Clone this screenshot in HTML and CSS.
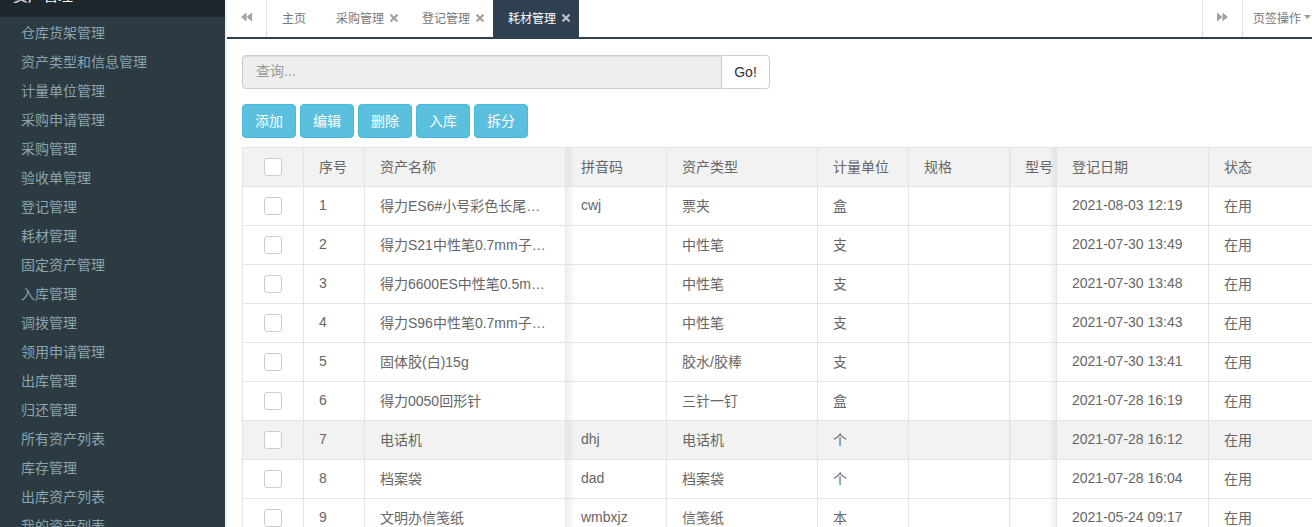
FILE: index.html
```html
<!DOCTYPE html>
<html lang="zh-CN">
<head>
<meta charset="utf-8">
<title>耗材管理</title>
<link rel="stylesheet" href="styles.css">
</head>
<body>
<div class="app">
  <aside class="sidebar">
    <div class="side-head"><span>资产管理</span></div>
    <ul class="side-menu">
      <li>仓库货架管理</li>
      <li>资产类型和信息管理</li>
      <li>计量单位管理</li>
      <li>采购申请管理</li>
      <li>采购管理</li>
      <li>验收单管理</li>
      <li>登记管理</li>
      <li>耗材管理</li>
      <li>固定资产管理</li>
      <li>入库管理</li>
      <li>调拨管理</li>
      <li>领用申请管理</li>
      <li>出库管理</li>
      <li>归还管理</li>
      <li>所有资产列表</li>
      <li>库存管理</li>
      <li>出库资产列表</li>
      <li>我的资产列表</li>
    </ul>
  </aside>
  <main class="main">
    <nav class="tabbar">
      <button class="tab-nav tab-nav-left" type="button">
        <svg class="nav-icon" width="11" height="10" viewBox="0 0 11 10"><polygon points="0,5 5.5,0.5 5.5,9.5"/><polygon points="5.5,5 11,0.5 11,9.5"/></svg>
      </button>
      <div class="tabs">
        <a class="tab tab-home">主页</a>
        <a class="tab">采购管理<svg class="tab-close" width="8" height="8" viewBox="0 0 8 8"><path d="M1.2 1.2L6.8 6.8M6.8 1.2L1.2 6.8"/></svg></a>
        <a class="tab">登记管理<svg class="tab-close" width="8" height="8" viewBox="0 0 8 8"><path d="M1.2 1.2L6.8 6.8M6.8 1.2L1.2 6.8"/></svg></a>
        <a class="tab tab-active">耗材管理<svg class="tab-close" width="8" height="8" viewBox="0 0 8 8"><path d="M1.2 1.2L6.8 6.8M6.8 1.2L1.2 6.8"/></svg></a>
      </div>
      <button class="tab-nav tab-nav-right" type="button">
        <svg class="nav-icon" width="11" height="10" viewBox="0 0 11 10"><polygon points="0,0.5 5.5,5 0,9.5"/><polygon points="5.5,0.5 11,5 5.5,9.5"/></svg>
      </button>
      <div class="tab-ops">页签操作<svg class="caret" width="7" height="4" viewBox="0 0 7 4"><polygon points="0,0 7,0 3.5,4"/></svg></div>
    </nav>
    <section class="content">
      <div class="search">
        <input type="text" placeholder="查询...">
        <button type="button">Go!</button>
      </div>
      <div class="toolbar">
        <button class="btn" type="button">添加</button>
        <button class="btn" type="button">编辑</button>
        <button class="btn" type="button">删除</button>
        <button class="btn" type="button">入库</button>
        <button class="btn" type="button">拆分</button>
      </div>
      <div class="table-wrap">
        <table class="grid">
          <colgroup>
            <col class="c-check"><col class="c-no"><col class="c-name"><col class="c-py"><col class="c-type"><col class="c-unit"><col class="c-spec"><col class="c-model"><col class="c-date"><col class="c-state">
          </colgroup>
          <thead>
            <tr><th class="chk"><span class="box"></span></th><th>序号</th><th>资产名称</th><th>拼音码</th><th>资产类型</th><th>计量单位</th><th>规格</th><th class="model">型号</th><th>登记日期</th><th>状态</th></tr>
          </thead>
          <tbody>
            <tr><td class="chk"><span class="box"></span></td><td>1</td><td>得力ES6#小号彩色长尾夹(12只/盒)</td><td>cwj</td><td>票夹</td><td>盒</td><td></td><td class="model"></td><td>2021-08-03 12:19</td><td>在用</td></tr>
            <tr><td class="chk"><span class="box"></span></td><td>2</td><td>得力S21中性笔0.7mm子弹头</td><td></td><td>中性笔</td><td>支</td><td></td><td class="model"></td><td>2021-07-30 13:49</td><td>在用</td></tr>
            <tr><td class="chk"><span class="box"></span></td><td>3</td><td>得力6600ES中性笔0.5mm(黑色)</td><td></td><td>中性笔</td><td>支</td><td></td><td class="model"></td><td>2021-07-30 13:48</td><td>在用</td></tr>
            <tr><td class="chk"><span class="box"></span></td><td>4</td><td>得力S96中性笔0.7mm子弹头</td><td></td><td>中性笔</td><td>支</td><td></td><td class="model"></td><td>2021-07-30 13:43</td><td>在用</td></tr>
            <tr><td class="chk"><span class="box"></span></td><td>5</td><td>固体胶(白)15g</td><td></td><td>胶水/胶棒</td><td>支</td><td></td><td class="model"></td><td>2021-07-30 13:41</td><td>在用</td></tr>
            <tr><td class="chk"><span class="box"></span></td><td>6</td><td>得力0050回形针</td><td></td><td>三针一钉</td><td>盒</td><td></td><td class="model"></td><td>2021-07-28 16:19</td><td>在用</td></tr>
            <tr class="row-hover"><td class="chk"><span class="box"></span></td><td>7</td><td>电话机</td><td>dhj</td><td>电话机</td><td>个</td><td></td><td class="model"></td><td>2021-07-28 16:12</td><td>在用</td></tr>
            <tr><td class="chk"><span class="box"></span></td><td>8</td><td>档案袋</td><td>dad</td><td>档案袋</td><td>个</td><td></td><td class="model"></td><td>2021-07-28 16:04</td><td>在用</td></tr>
            <tr><td class="chk"><span class="box"></span></td><td>9</td><td>文明办信笺纸</td><td>wmbxjz</td><td>信笺纸</td><td>本</td><td></td><td class="model"></td><td>2021-05-24 09:17</td><td>在用</td></tr>
          </tbody>
        </table>
      </div>
    </section>
  </main>
</div>
</body>
</html>
```
FILE: styles.css
```css
html, body {
  margin: 0;
  padding: 0;
  height: 527px;
  overflow: hidden;
}
body {
  font-family: "Liberation Sans", "Noto Sans CJK SC", sans-serif;
  font-size: 14px;
  color: #666;
  background: #fff;
}
.app {
  display: flex;
  height: 527px;
}

/* Sidebar */
.sidebar {
  width: 225px;
  flex: none;
  background: #2c3b41;
  overflow: hidden;
}
.side-head {
  height: 17px;
  background: #1e282c;
  overflow: hidden;
  color: #fff;
  font-size: 15px;
  padding-left: 13px;
}
.side-head span {
  display: block;
  line-height: 20px;
  margin-top: -14px;
}
.side-menu {
  list-style: none;
  margin: 0;
  padding: 2px 0 0 21px;
}
.side-menu li {
  height: 29px;
  line-height: 29px;
  color: #8aa4af;
  font-size: 14px;
  white-space: nowrap;
}

/* Main */
.main {
  flex: 1;
  min-width: 0;
  border-left: 2px solid #eef1f4;
  display: flex;
  flex-direction: column;
  background: #fff;
}
.tabbar {
  display: flex;
  height: 37px;
  flex: none;
  border-bottom: 2px solid #2f4050;
  background: #fff;
}
.tab-nav {
  flex: none;
  width: 40px;
  height: 37px;
  padding: 0 0 3px;
  margin: 0;
  border: none;
  background: #fff;
  display: flex;
  align-items: center;
  justify-content: center;
  box-sizing: border-box;
}
.tab-nav-left {
  border-right: 1px solid #e2e2e2;
}
.tab-nav-right {
  width: 41px;
  border-left: 1px solid #e2e2e2;
  border-right: 1px solid #e2e2e2;
}
.nav-icon {
  fill: #9da3a8;
}
.tabs {
  flex: 1;
  display: flex;
  min-width: 0;
}
.tab {
  display: flex;
  align-items: center;
  height: 37px;
  box-sizing: border-box;
  padding: 0 9px 3px 15px;
  font-size: 12px;
  color: #777;
  white-space: nowrap;
}
.tab-home {
  padding: 0 15px 3px;
}
.tab-close {
  margin-left: 6px;
  margin-top: 1px;
  stroke: #a3a3a3;
  stroke-width: 2.3;
  stroke-linecap: round;
}
.tab-active {
  background: #2f4050;
  color: #fff;
}
.tab-active .tab-close {
  stroke: #b8bec4;
}
.tab-ops {
  flex: none;
  width: 69px;
  box-sizing: border-box;
  padding: 0 0 3px 10px;
  display: flex;
  align-items: center;
  font-size: 12px;
  color: #777;
  white-space: nowrap;
}
.caret {
  margin-left: 3px;
  fill: #999;
}

/* Content */
.content {
  flex: 1;
  overflow: hidden;
  padding: 16px 0 0 15px;
}
.search {
  display: flex;
  width: 528px;
  height: 34px;
}
.search input {
  flex: 1;
  min-width: 0;
  height: 34px;
  box-sizing: border-box;
  margin: 0;
  border: 1px solid #ccc;
  border-radius: 4px 0 0 4px;
  background: #eee;
  padding: 0 13px 2px;
  font: inherit;
  color: #555;
  box-shadow: inset 0 1px 1px rgba(0, 0, 0, .075);
  outline: none;
}
.search input::placeholder {
  color: #999;
}
.search button {
  flex: none;
  width: 48px;
  height: 34px;
  margin: 0;
  border: 1px solid #ccc;
  border-left: none;
  border-radius: 0 4px 4px 0;
  background: #fff;
  color: #333;
  font: inherit;
  padding: 0 0 1px;
}
.toolbar {
  display: flex;
  gap: 4px;
  margin-top: 15px;
}
.btn {
  height: 34px;
  padding: 0 12px 3px;
  margin: 0;
  border: 1px solid #46b8da;
  border-radius: 4px;
  background: #5bc0de;
  color: #fff;
  font: inherit;
  font-size: 14px;
}

/* Table */
.table-wrap {
  margin-top: 9px;
}
.grid {
  width: 1087px;
  table-layout: fixed;
  border-collapse: collapse;
}
.c-check { width: 61px; }
.c-no { width: 61px; }
.c-name { width: 201px; }
.c-py { width: 101px; }
.c-type { width: 151px; }
.c-unit { width: 91px; }
.c-spec { width: 101px; }
.c-model { width: 47px; }
.c-date { width: 152px; }
.c-state { width: 121px; }
.grid th,
.grid td {
  border: 1px solid #e4e4e4;
  padding: 0 15px 2px;
  height: 36px;
  text-align: left;
  font-weight: normal;
  white-space: nowrap;
  overflow: hidden;
  text-overflow: ellipsis;
  color: #666;
  vertical-align: middle;
}
.grid th {
  height: 36px;
  background: #f2f2f2;
}
.grid .chk {
  padding: 0;
  text-align: center;
}
.grid .model {
  padding-right: 0;
  text-overflow: clip;
}
.box {
  display: inline-block;
  width: 16px;
  height: 16px;
  border: 1px solid #ccc;
  border-radius: 3px;
  background: #fff;
  vertical-align: middle;
}
.grid th:nth-child(4),
.grid td:nth-child(4) {
  background-image: linear-gradient(to right, rgba(0, 0, 0, .07), rgba(0, 0, 0, 0) 8px);
}
.grid th:nth-child(8),
.grid td:nth-child(8) {
  background-image: linear-gradient(to left, rgba(0, 0, 0, .07), rgba(0, 0, 0, 0) 8px);
}
.grid .row-hover td {
  background-color: #f2f2f2;
}
```
